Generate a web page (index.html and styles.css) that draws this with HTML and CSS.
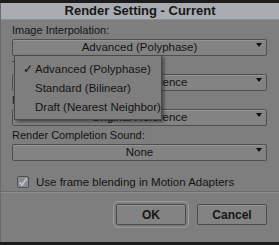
FILE: index.html
```html
<!DOCTYPE html>
<html>
<head>
  <meta charset="UTF-8">
  <title>Render Setting - Current</title>
  <link rel="stylesheet" href="styles.css">
</head>
<body>
  <div class="dialog">
    <div class="titlebar">Render Setting - Current</div>

    <div class="content">
      <div class="field">
        <div class="label">Image Interpolation:</div>
        <div class="select">Advanced (Polyphase)<span class="arrow"></span></div>

        <div class="menu">
          <div class="item checked">Advanced (Polyphase)</div>
          <div class="item">Standard (Bilinear)</div>
          <div class="item">Draft (Nearest Neighbor)</div>
        </div>
      </div>
      <div class="field">
        <div class="label">Title Render Quality:</div>
        <div class="select">Original Reference<span class="arrow"></span></div>
      </div>
      <div class="field">
        <div class="label">Motion Effect Render Using:</div>
        <div class="select">Original Reference<span class="arrow"></span></div>
      </div>
      <div class="field">
        <div class="label">Render Completion Sound:</div>
        <div class="select">None<span class="arrow"></span></div>
      </div>

      <label class="check-row">
        <span class="checkbox">
          <svg width="10" height="10" viewBox="0 0 10 10">
            <path d="M1.5 5.2 L4 8 L8.6 1.5" fill="none" stroke="#c3c8ce" stroke-width="1.6"/>
          </svg>
        </span>
        Use frame blending in Motion Adapters
      </label>
    </div>

    <div class="separator"></div>

    <div class="buttons">
      <button class="btn default">OK</button>
      <button class="btn">Cancel</button>
    </div>
  </div>
</body>
</html>
```

FILE: styles.css
```css
body {
  margin: 0;
  background: #1c1c1c;
  font-family: "Liberation Sans", Arial, sans-serif;
  font-size: 11px;
  color: #141414;
}

.dialog {
  width: 279px;
  height: 239px;
  margin-top: 3px;
  background: #7e7e7e;
  border-left: 1px solid #6a6a6a;
  box-sizing: border-box;
}

.titlebar {
  height: 16px;
  line-height: 16px;
  background: #a9adb2;
  border-bottom: 1px solid #8c9094;
  text-align: center;
  font-weight: bold;
  font-size: 13px;
  color: #161616;
}

.content {
  padding: 3px 12px 0 11px;
}

.field {
  position: relative;
  margin-bottom: 2px;
}

.label {
  height: 14px;
  line-height: 14px;
  margin-bottom: 2px;
}

.select {
  position: relative;
  height: 15px;
  line-height: 15px;
  text-align: center;
  background: #838383;
  border: 1px solid #4f4f4f;
  border-radius: 2px;
  box-shadow: inset 0 1px 0 #959595;
  font-size: 11.5px;
}

.arrow {
  position: absolute;
  right: 4px;
  top: 3px;
  border-left: 3.5px solid transparent;
  border-right: 3.5px solid transparent;
  border-top: 4px solid #111;
}

.menu {
  position: absolute;
  left: 2px;
  top: 32px;
  width: 146px;
  padding: 4px 0 2px;
  background: #7e7e7e;
  border: 1px solid #4a4a4a;
  box-shadow: 2px 2px 3px rgba(0, 0, 0, 0.45);
  z-index: 2;
}

.item {
  height: 19px;
  line-height: 19px;
  padding-left: 20px;
  font-size: 11.5px;
}

.item.checked::before {
  content: "\2713";
  position: absolute;
  left: 8px;
}

.check-row {
  display: flex;
  align-items: center;
  gap: 7px;
  margin: 14px 0 0 5px;
  height: 14px;
  font-size: 11.5px;
}

.checkbox {
  display: flex;
  align-items: center;
  justify-content: center;
  width: 10px;
  height: 10px;
  background: #8a8d91;
  border: 1px solid #4d4f52;
  border-radius: 2px;
}

.separator {
  height: 1px;
  margin-top: 2px;
  background: #6c6c6c;
  border-bottom: 1px solid #8d8d8d;
}

.buttons {
  display: flex;
  justify-content: flex-end;
  gap: 11px;
  padding: 11px 12px 0 0;
}

.btn {
  width: 70px;
  height: 21px;
  padding: 0;
  background: #838383;
  border: 1px solid #4b4b4b;
  border-radius: 2px;
  box-shadow: inset 0 1px 0 #969696;
  font-family: "Liberation Sans", Arial, sans-serif;
  font-size: 12px;
  font-weight: bold;
  color: #161616;
}

.btn.default {
  outline: 1px solid #9a9a9a;
  outline-offset: 2px;
}
```
